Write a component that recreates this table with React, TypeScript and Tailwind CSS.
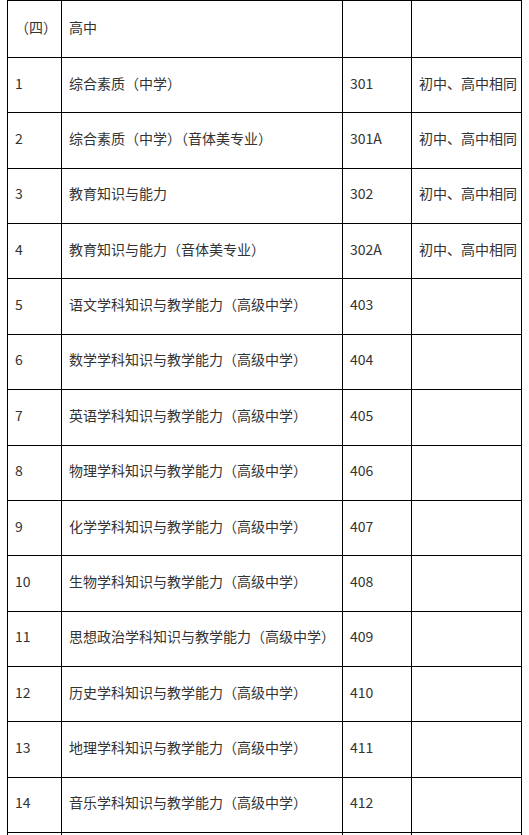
const rows: [string, string, string, string][] = [
  ['1', '综合素质（中学）', '301', '初中、高中相同'],
  ['2', '综合素质（中学）（音体美专业）', '301A', '初中、高中相同'],
  ['3', '教育知识与能力', '302', '初中、高中相同'],
  ['4', '教育知识与能力（音体美专业）', '302A', '初中、高中相同'],
  ['5', '语文学科知识与教学能力（高级中学）', '403', ''],
  ['6', '数学学科知识与教学能力（高级中学）', '404', ''],
  ['7', '英语学科知识与教学能力（高级中学）', '405', ''],
  ['8', '物理学科知识与教学能力（高级中学）', '406', ''],
  ['9', '化学学科知识与教学能力（高级中学）', '407', ''],
  ['10', '生物学科知识与教学能力（高级中学）', '408', ''],
  ['11', '思想政治学科知识与教学能力（高级中学）', '409', ''],
  ['12', '历史学科知识与教学能力（高级中学）', '410', ''],
  ['13', '地理学科知识与教学能力（高级中学）', '411', ''],
  ['14', '音乐学科知识与教学能力（高级中学）', '412', ''],
];

const cell = 'border border-black px-[7px] pb-1 align-middle';

export default function App() {
  return (
    <div
      className="h-[835px] overflow-hidden bg-white pl-[7px] text-[14px] text-[#333]"
      style={{ fontFamily: '"Noto Sans CJK SC", "Noto Sans", sans-serif' }}
    >
      <table className="border-collapse table-fixed w-[514px]">
        <colgroup>
          <col className="w-[54px]" />
          <col className="w-[281px]" />
          <col className="w-[69px]" />
          <col className="w-[110px]" />
        </colgroup>
        <tbody>
          <tr className="h-[57px]">
            <td className={cell}>（四）</td>
            <td className={cell}>高中</td>
            <td className={cell}></td>
            <td className={cell}></td>
          </tr>
          {rows.map(([no, name, code, note]) => (
            <tr key={no} className="h-[55.36px]">
              <td className={cell}>{no}</td>
              <td className={`${cell} whitespace-nowrap`}>{name}</td>
              <td className={cell}>{code}</td>
              <td className={`${cell} whitespace-nowrap`}>{note}</td>
            </tr>
          ))}
          {/* next row continues below the fold */}
          <tr className="h-[55.36px]">
            <td className={cell}></td>
            <td className={cell}></td>
            <td className={cell}></td>
            <td className={cell}></td>
          </tr>
        </tbody>
      </table>
    </div>
  );
}
